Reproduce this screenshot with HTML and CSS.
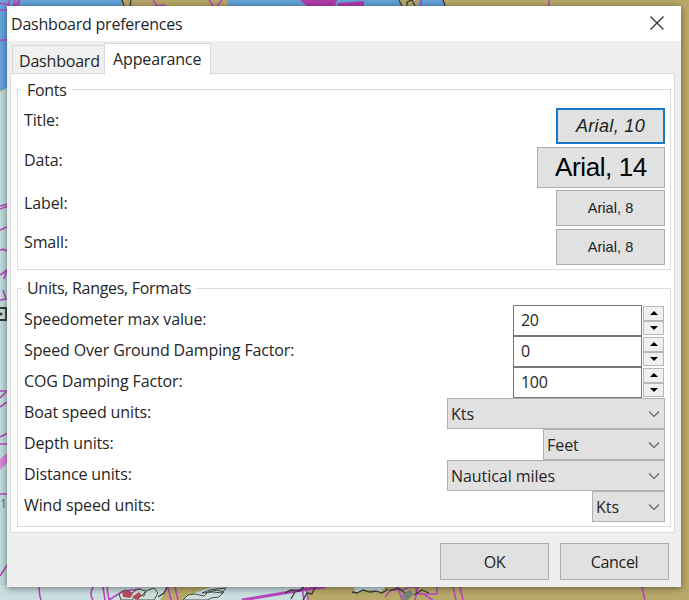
FILE: index.html
```html
<!DOCTYPE html>
<html lang="en">
<head>
<meta charset="utf-8">
<title>Dashboard preferences</title>
<link rel="stylesheet" href="styles.css">
</head>
<body>
<svg class="chart" viewBox="0 0 689 600" width="689" height="600" aria-hidden="true">
  <path fill="#b9aa6a" d="M0 0h689v600H0z"/>
  <path fill="#64a5dc" d="M0 0h445v90H0z"/>
  <path fill="#bfdcdd" d="M0 92l8-5v513H0z"/>
  <path fill="#c9dfe0" d="M0 585h168l-4 8-4 7H0zM216 585h93l-2 15h-96l-26 0 10-7zM352 585h36l-8 7-10-2-14 2z"/>
  <path fill="#b9aa6a" d="M122 0h105v8H122zM399 0h20l-2 8h-15zM442 0h22v8h-18z"/>
  <path fill="#b43cab" d="M300 0h37l-2 6h-28zM338 3l26-2v5h-26z"/>
  <g fill="none" stroke="#b946be" stroke-width="1.6">
    <path d="M0 3l9 2M9 0v9M15 0l-2 7M20 0l-2 6M0 10h12l7-10M0 40h8M153 0l4 6 8-1M209 0l4 6M222 0l-5 6M421 0v6M549 0v6"/>
    <path d="M0 206l8-2M0 209l8-3M0 230l7-3M0 250q5-2 8 2M0 275l7-5-3 9M0 300l6-1-3-9M0 398l7-7M0 407l7-5M0 391h6M0 437l8-4M0 444h7M0 494h7M0 576l8-12"/>
    <path d="M39 587q0 7 2 13M93 587q-4 7 0 13M103 587l2 13M107 587l2 13M109 600l14-9 18-2M168 587l3 13M175 587l3 13M302 587l2 13M306 587l2 13M385 597l6-7h12l6-3h7v7h21v-7M398 587l4 13M418 587l-3 13M423 594l10 6M453 587l3 13M460 587l3 13M642 587l3 13"/>
    <path stroke-width="3" d="M242 600l66-11 17-2"/>
  </g>
  <path fill="#d889dc" d="M0 459l7-6v10l-7 7z"/>
  <g fill="#cfdedb" stroke="#475049">
    <path d="M119 594l6-4 7 3 6-4 8 2-2 5-7-2-5 6h-11zM137 600l9-9 8-3 4 5-4 7z"/>
    <path d="M183 600l5-5 7-1 9 2 4-4 9-2 7 2-5 5-8 1-3 2zM202 593l8-3 7-1 9-1-4 5-9-1z"/>
  </g>
  <path fill="#b84d59" d="M122 592l6-2 5 4-3 4-7-1zM132 597l7-5 3 4-6 4z"/>
  <path fill="none" stroke="#343c38" stroke-width="1.3" d="M122 0l2 6M131 0l-1 6M399 0l3 6M407 6V2l5-2 3 6M443 0l2 6M158 597l6-4 3-6M285 593l6-3 8 1 5-4M291 599l4-7M303 600l4-7 5 1 3-7M352 592l5 1 6-3 7 2 6-1 6 2 6-4M389 591l9-3 7 5M414 595l8-5 7 3"/>
  <path fill="#7b837d" d="M402 594l8-4 4 4-6 6h-5z"/>
  <path fill="#c9dddd" stroke="#343c38" stroke-width="1.8" d="M-2 308H6v12h-8"/>
  <circle cx="1" cy="314" r="1.5" fill="#343c38"/>
  <text class="depth" x="0" y="508">1</text>
</svg>
<main class="dialog">
  <header class="titlebar">
    <h1>Dashboard preferences</h1>
    <svg class="close" viewBox="0 0 14 14" width="14" height="14"><path d="M.5.5l13 13M13.5.5l-13 13"/></svg>
  </header>
  <nav class="tabs"><span class="tab first">Dashboard</span><span class="tab active">Appearance</span></nav>
  <div class="page">
    <section class="group fonts">
      <h2>Fonts</h2>
      <div class="row title"><label>Title:</label><button class="font italic">Arial, 10</button></div>
      <div class="row data"><label>Data:</label><button class="font large">Arial, 14</button></div>
      <div class="row small"><label>Label:</label><button class="font">Arial, 8</button></div>
      <div class="row small"><label>Small:</label><button class="font">Arial, 8</button></div>
    </section>
    <section class="group units">
      <h2>Units, Ranges, Formats</h2>
      <div class="row"><label>Speedometer max value:</label><span class="field">20</span><span class="spin"><i class="up"></i><i class="down"></i></span></div>
      <div class="row"><label>Speed Over Ground Damping Factor:</label><span class="field">0</span><span class="spin"><i class="up"></i><i class="down"></i></span></div>
      <div class="row"><label>COG Damping Factor:</label><span class="field">100</span><span class="spin"><i class="up"></i><i class="down"></i></span></div>
      <div class="row"><label>Boat speed units:</label><span class="select wide">Kts<svg viewBox="0 0 12 8"><path d="M1 1.5l5 5 5-5"/></svg></span></div>
      <div class="row"><label>Depth units:</label><span class="select medium">Feet<svg viewBox="0 0 12 8"><path d="M1 1.5l5 5 5-5"/></svg></span></div>
      <div class="row"><label>Distance units:</label><span class="select wide">Nautical miles<svg viewBox="0 0 12 8"><path d="M1 1.5l5 5 5-5"/></svg></span></div>
      <div class="row"><label>Wind speed units:</label><span class="select narrow">Kts<svg viewBox="0 0 12 8"><path d="M1 1.5l5 5 5-5"/></svg></span></div>
    </section>
  </div>
  <footer class="actions"><button>OK</button><button>Cancel</button></footer>
</main>
</body>
</html>
```
FILE: styles.css
```css
* { box-sizing: border-box; }
body { margin: 0; width: 689px; height: 600px; overflow: hidden; padding: 6px 0 0 7px; font: 16px/20px "Open Sans", "Noto Sans", sans-serif; letter-spacing: -0.3px; color: #262626; }
.chart { position: absolute; left: 0; top: 0; }
.depth { font: 12px "Open Sans", sans-serif; letter-spacing: 0; fill: #68777a; }
.dialog { position: relative; width: 674px; height: 581px; background: #efefef; box-shadow: 0 1px 7px rgba(0,0,0,.5); display: flex; flex-direction: column; }
.titlebar { height: 35px; background: #fff; display: flex; justify-content: space-between; padding: 8px 17px 0 4px; }
h1, h2 { margin: 0; font: inherit; }
h1 { letter-spacing: -.22px; }
.close { margin-top: 2px; fill: none; stroke: #333; stroke-width: 1.3; }
.tabs { height: 32px; padding-left: 5px; display: flex; align-items: flex-end; }
.tab { height: 28px; width: 93px; border: 1px solid #d9d9d9; border-bottom: 0; border-right: 0; padding: 5px 0 0 6px; background: #f0f0f0; letter-spacing: -.2px; }
.tab.active { position: relative; height: 32px; width: 107px; margin: 0 0 -2px -1px; border-right: 1px solid #d9d9d9; background: #fff; padding: 5px 0 0 8px; letter-spacing: -.12px; }
.page { margin: 0 6px 0 3px; height: 460px; background: #fff; border: 1px solid #dadada; padding: 15px 3px 0 6px; }
.group { border: 1px solid #dcdcdc; padding: 0 5px 0 6px; }
.group h2 { width: max-content; background: #fff; margin: -10px 0 0 -2px; padding: 0 5px; height: 20px; }
.fonts { height: 181px; }
.units { height: 239px; margin-top: 18px; }
.units h2 { margin-top: -11px; height: 21px; }
.row { display: flex; height: 31px; align-items: flex-start; }
.row label { flex: 1; padding-top: 4px; letter-spacing: -.13px; }
button { font: inherit; letter-spacing: inherit; color: #222; background: #e1e1e1; border: 1px solid #adadad; padding: 0; }
.font { width: 109px; height: 36px; font: 14.5px "Liberation Sans", Arial, sans-serif; letter-spacing: .05px; }
.fonts .row label { padding-top: 3px; }
.row.title { height: 39px; margin-top: 8px; }
.row.title label { padding-top: 2px; }
.row.data { height: 43px; }
.row.small { height: 39px; }
.font.italic { border: 2px solid #1678c8; font-size: 18px; font-style: italic; letter-spacing: .35px; }
.font.large { width: 128px; height: 41px; font-size: 26px; color: #000; letter-spacing: -.4px; }
.units h2 + .row { margin-top: 6px; }
.field { width: 129px; height: 31px; border: 1px solid #777; padding: 4px 7px; background: #fff; letter-spacing: -.3px; }
.spin { width: 21px; height: 29px; margin: 1px 1px 0 1px; display: grid; grid-template-rows: 1fr 1fr; }
.spin i { border: 1px solid #b7b7b7; background: #f0f0f0; display: grid; place-items: center; }
.spin i::before { content: ""; border: 4.5px solid transparent; }
.spin .up::before { border-top: 0; border-bottom-color: #000; }
.spin .down::before { border-bottom: 0; border-top-color: #000; }
.select { height: 31px; border: 1px solid #b0b0b0; background: #e1e1e1; display: flex; align-items: center; justify-content: space-between; padding: 1px 4px 0 3px; letter-spacing: -.05px; }
.select svg { width: 12px; height: 8px; fill: none; stroke: #666; stroke-width: 1.2; }
.wide { width: 218px; }
.medium { width: 122px; }
.narrow { width: 73px; }
.actions { margin-top: 10px; display: flex; justify-content: flex-end; gap: 11px; padding-right: 12px; }
.actions button { width: 109px; height: 37px; }
```
